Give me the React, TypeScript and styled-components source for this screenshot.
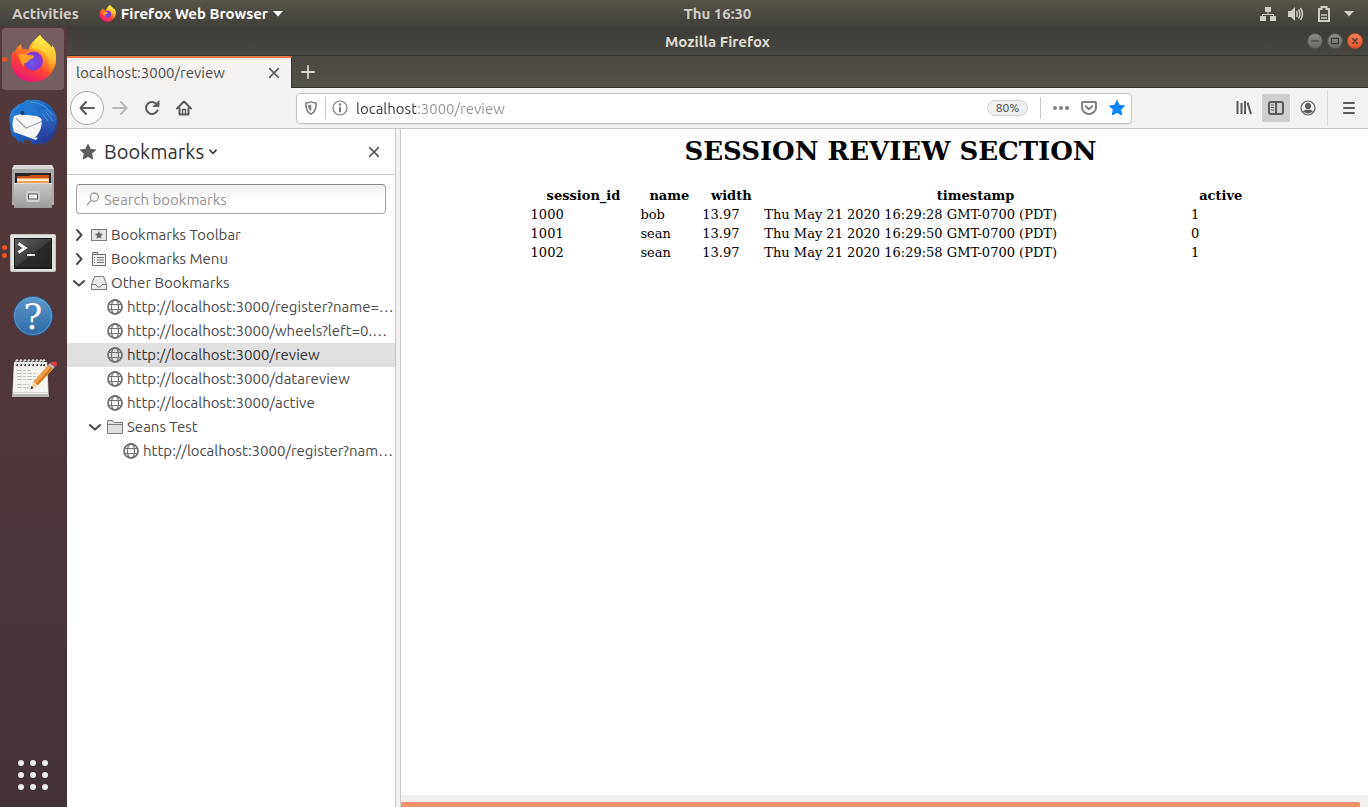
import React from "react";
import styled, { createGlobalStyle, css } from "styled-components";

const uiFont = `Ubuntu, "Noto Sans", sans-serif`;
const pageFont = `"DejaVu Serif", serif`;

const GlobalStyle = createGlobalStyle`
  *, *::before, *::after { box-sizing: border-box; }
  body { margin: 0; font-family: ${uiFont}; font-size: 15px; color: #4a4a4a; }
  button, input { font: inherit; color: inherit; }
  button { padding: 0; border: 0; background: none; }
  svg { display: block; flex: none; }
`;

const Desktop = styled.div`
  min-height: 100vh;
  display: flex;
  flex-direction: column;
`;

/* ---------- top panel ---------- */

const Panel = styled.header`
  height: 27px;
  display: flex;
  align-items: center;
  background: linear-gradient(#57544a, #403f39);
  color: #dfdbd2;
  font-weight: 600;
`;

const PanelStart = styled.div`
  flex: 1 1 81px;
  display: flex;
  align-items: center;
  gap: 20px;
  padding-left: 12px;
`;

const PanelEnd = styled.div`
  flex: 1 1 14px;
  display: flex;
  justify-content: flex-end;
  align-items: center;
  gap: 12px;
  padding-right: 14px;
`;

const PanelButton = styled.button<{ $bright?: boolean }>`
  display: flex;
  align-items: center;
  gap: 5px;
  font-weight: ${(p) => (p.$bright ? 700 : 600)};
  color: ${(p) => (p.$bright ? "#fff" : "#d0cdc6")};
  line-height: 16px;
  white-space: nowrap;
`;

const Workspace = styled.div`
  flex: 1;
  display: flex;
`;

/* ---------- dock ---------- */

const Dock = styled.nav`
  flex: none;
  width: 67px;
  display: flex;
  flex-direction: column;
  gap: 2px;
  padding: 1px 3px 1px 2px;
  background: linear-gradient(#53393b, #4d363a 55%, #423238);
`;

const DockItem = styled.button<{ $active?: boolean; $last?: boolean }>`
  position: relative;
  height: 62px;
  display: flex;
  align-items: center;
  justify-content: center;
  border-radius: 4px;
  background: ${(p) => (p.$active ? "#745e60" : "none")};
  ${(p) => p.$last && css`margin-top: auto;`}
`;

const Running = styled.span`
  position: absolute;
  left: 0;
  top: 0;
  bottom: 0;
  display: flex;
  flex-direction: column;
  justify-content: center;
  gap: 3px;
`;

const Dot = styled.i`
  width: 5px;
  height: 5px;
  border-radius: 50%;
  background: #e95420;
`;

/* ---------- browser window ---------- */

const Window = styled.section`
  flex: 1;
  min-width: 0;
  display: flex;
  flex-direction: column;
`;

const Chrome = styled.div`
  background: linear-gradient(#3c3b37, #504d45 70%, #525047);
`;

const TitleBar = styled.div`
  height: 28px;
  display: grid;
  grid-template-columns: 1fr auto 1fr;
  align-items: center;
  color: #dfdbd2;
  font-weight: 700;
`;

const WindowControls = styled.div`
  grid-column: 3;
  display: flex;
  justify-content: flex-end;
  gap: 4px;
  padding-right: 5px;
`;

const WindowTitle = styled.span`
  grid-column: 2;
`;

const ControlButton = styled.button<{ $close?: boolean }>`
  width: 16px;
  height: 16px;
  border-radius: 50%;
  border: 1px solid ${(p) => (p.$close ? "#b9502d" : "#55534c")};
  background: ${(p) =>
    p.$close ? "linear-gradient(#f58159, #e2512a)" : "linear-gradient(#8c8b84, #6b6962)"};
  color: #3c3b37;
  display: flex;
  align-items: center;
  justify-content: center;
`;

const TabStrip = styled.div`
  height: 33px;
  display: flex;
  border-top: 1px solid #35342f;
`;

const Tab = styled.div`
  width: 225px;
  display: flex;
  align-items: center;
  justify-content: space-between;
  padding: 0 10px 0 9px;
  border-top: 2px solid #f07746;
  border-right: 1px solid #35342f;
  background: #f4f3f1;
  color: #4c4c4c;
  line-height: 16px;
`;

const NewTabArea = styled.div`
  flex: 1;
  display: flex;
  align-items: center;
  padding-left: 7px;
  border-bottom: 1px solid #35342f;
`;

const IconButton = styled.button<{ $size?: number; $pressed?: boolean; $color?: string }>`
  flex: none;
  width: ${(p) => p.$size ?? 32}px;
  height: ${(p) => Math.min(p.$size ?? 28, 28)}px;
  display: flex;
  align-items: center;
  justify-content: center;
  border-radius: 2px;
  color: ${(p) => p.$color ?? "#5b5b5b"};
  background: ${(p) => (p.$pressed ? "#d0cfce" : "none")};
`;

const Toolbar = styled.div`
  height: 41px;
  display: flex;
  align-items: center;
  padding: 0 3px;
  background: #f4f3f1;
  border-bottom: 1px solid #c9c7c5;
`;

const BackButton = styled.button`
  width: 34px;
  height: 34px;
  border-radius: 50%;
  border: 1px solid #aaa9a7;
  background: #fbfbfa;
  color: #5b5b5b;
  display: flex;
  align-items: center;
  justify-content: center;
`;

const FlexSpace = styled.span`
  flex: 1 1 96px;
  max-width: 96px;
`;

const FieldGap = styled.span<{ $w: number }>`
  flex: none;
  width: ${(p) => p.$w}px;
`;

const AddressBar = styled.div`
  flex: 1 1 836px;
  height: 31px;
  display: flex;
  align-items: center;
  padding: 0 0 0 6px;
  border: 1px solid #c5c3c0;
  border-radius: 4px;
  background: #fff;
  box-shadow: 0 1px 2px rgba(0, 0, 0, 0.06);
`;

const BarLine = styled.span<{ $tall?: boolean }>`
  flex: none;
  width: 1px;
  height: ${(p) => (p.$tall ? 34 : 22)}px;
  background: ${(p) => (p.$tall ? "#dcdad8" : "#c8c7c5")};
`;

const AddressInput = styled.input`
  flex: 1;
  min-width: 0;
  padding: 0;
  border: 0;
  outline: 0;
  background: linear-gradient(90deg, #333 60px, #949494 60px);
  background-clip: text;
  -webkit-text-fill-color: transparent;
`;

const ZoomPill = styled.button`
  width: 41px;
  height: 16px;
  margin-right: 12px;
  border: 1px solid #cfcfcf;
  border-radius: 8px;
  background: #f0f0f0;
  color: #444;
  font-size: 12px;
  line-height: 14px;
`;

const Body = styled.div`
  flex: 1;
  display: flex;
`;

/* ---------- bookmarks sidebar ---------- */

const Sidebar = styled.aside`
  flex: none;
  width: 329px;
  border-right: 1px solid #c9c7c5;
  background: #fff;
`;

const Splitter = styled.div`
  flex: none;
  width: 5px;
  background: #f2f1ef;
  border-right: 1px solid #c9c7c5;
`;

const SidebarHeader = styled.div`
  height: 46px;
  display: flex;
  align-items: center;
  justify-content: space-between;
  padding: 0 12px 0 13px;
  border-bottom: 1px solid #c9c7c5;
`;

const SidebarSwitch = styled.button`
  display: flex;
  align-items: center;
  gap: 4px;
  color: #333;
  font-size: 20px;
`;

const SidebarName = styled.span`
  padding-left: 4px;
`;

const SearchBox = styled.label`
  height: 30px;
  margin: 9px;
  display: flex;
  align-items: center;
  gap: 4px;
  padding: 0 9px;
  border: 1px solid #a5a4a2;
  border-top-color: #888785;
  border-radius: 4px;
  background: linear-gradient(#f1f1f0, #fff 60%);
  color: #8e8e8e;
`;

const SearchInput = styled.input`
  flex: 1;
  min-width: 0;
  padding: 0;
  border: 0;
  outline: 0;
  background: none;
  &::placeholder {
    color: #939393;
    opacity: 1;
  }
`;

const Tree = styled.ul`
  margin: 0;
  padding: 0;
  list-style: none;
`;

const rowStyle = css<{ $level: number }>`
  width: 100%;
  height: 24px;
  display: flex;
  align-items: center;
  gap: 4px;
  text-align: left;
  white-space: nowrap;
  text-decoration: none;
  line-height: 18px;
  color: #4a4a4a;
`;

const FolderRow = styled.button<{ $level: number }>`
  ${rowStyle}
  padding-left: ${(p) => 4 + p.$level * 16}px;
`;

const LinkRow = styled.a<{ $level: number; $selected?: boolean }>`
  ${rowStyle}
  padding-left: ${(p) => 24 + p.$level * 16}px;
  background: ${(p) => (p.$selected ? "#e0e0e0" : "none")};
  ${(p) => p.$selected && css`color: #333;`}
`;

/* ---------- web page ---------- */

const Viewport = styled.div`
  flex: 1;
  min-width: 0;
  display: flex;
  flex-direction: column;
  background: #fff;
`;

const Page = styled.main`
  flex: 1;
  padding: 7px 0 0 12px;
  font-family: ${pageFont};
  font-size: 13px;
  color: #000;
`;

const Heading = styled.h1`
  margin: 0 0 18px;
  font-size: 26px;
  line-height: 31px;
  text-align: center;
`;

const SessionTable = styled.table`
  width: 76%;
  margin: 0 auto;
  table-layout: fixed;
  border-collapse: separate;
  border-spacing: 2px;
  line-height: 15px;
  th, td { padding: 1px; white-space: nowrap; }
`;

const Col = styled.col<{ $share: number }>`
  width: ${(p) => p.$share}%;
`;

const ScrollTrack = styled.div`
  height: 12px;
  padding: 7px 8px 0 0;
  background: #f1f0ee;
`;

const ScrollThumb = styled.div`
  height: 5px;
  border-radius: 0 2px 0 0;
  background: #f2906a;
`;

/* ---------- icons ---------- */

const FirefoxLogo = ({ size, id }: { size: number; id: string }) => (
  <svg width={size} height={size} viewBox="0 0 48 48">
    <defs>
      <linearGradient id={id + "a"} x1="0.8" y1="0" x2="0.3" y2="1">
        <stop offset="0" stopColor="#fff44f" />
        <stop offset="0.35" stopColor="#ffa41f" />
        <stop offset="0.65" stopColor="#ff4533" />
        <stop offset="1" stopColor="#e5147d" />
      </linearGradient>
      <linearGradient id={id + "b"} x1="0.6" y1="0" x2="0.5" y2="1">
        <stop offset="0" stopColor="#fff651" />
        <stop offset="0.5" stopColor="#ffc52e" />
        <stop offset="1" stopColor="#ff8a22" stopOpacity="0" />
      </linearGradient>
      <radialGradient id={id + "c"} cx="0.4" cy="0.6" r="0.65">
        <stop offset="0" stopColor="#6a5bf0" />
        <stop offset="0.6" stopColor="#7a3fd8" />
        <stop offset="1" stopColor="#9a2bc6" />
      </radialGradient>
    </defs>
    <path
      fill={`url(#${id}a)`}
      d="M31 0C34 5 40 8 43 13c.6-1 .4-2 .2-3C46 14 47 18 47 24c0 13-10 23-23 23S2 38 2 26c0-4 .7-8 3-11l.2 3c1-4 4-7 7-9 0 2 .5 4 1.500 5 2 0 4 0 6 1C20 9 25 6 31 0z"
    />
    <path
      fill={`url(#${id}b)`}
      d="M31 0C34 5 40 8 43 13c.6-1 .4-2 .2-3C46 14 47 18 47 24c0 7-4 14-10 17 4-7 4-17-2-23-4-4-9-4-12-5 0-5 4-9 8-13z"
    />
    <circle cx="24.500" cy="26" r="9.500" fill={`url(#${id}c)`} />
    <path
      fill="#ffa126"
      d="M9 20c3-2 7-1 10 0 2 .5 5 0 6 1 0 2-3 3-5 4-1 2-2 3-4 3-1 0-1 2-1 4-3-3-4-8-6-12z"
    />
    <path fill="#ff6a2b" d="M13.500 14c2 0 4 0 6 1-2 1-3 3-3 4-3 0-6 0-8 2 0-3 2-5 5-7z" />
  </svg>
);

const ThunderbirdLogo = () => (
  <svg width="48" height="48" viewBox="0 0 48 48">
    <defs>
      <linearGradient id="tb" x1="0" y1="0" x2="1" y2="1">
        <stop offset="0" stopColor="#2f8fe0" />
        <stop offset="0.5" stopColor="#1f62bd" />
        <stop offset="1" stopColor="#2a2a86" />
      </linearGradient>
      <linearGradient id="tbWing" x1="0" y1="0" x2="0" y2="1">
        <stop offset="0" stopColor="#2a76cc" />
        <stop offset="1" stopColor="#27348f" />
      </linearGradient>
    </defs>
    <path
      fill="url(#tb)"
      d="M14 4c2-3 5-4 8-3C36-1 48 9 48 24c0 12-8 21-17 22l2-3c-3 2-7 3-10 2l-1-3 -6-2 -2 5 -3-4 -1 3c-2-2-3-4-4-6l-3-1C2 33 1 30 1 28l1 .5C0 23 0 17 2 13 4 9 9 5 14 4z"
    />
    <path fill="#f6f6f7" d="M5 17l4-2 19 2 5 3c1 8-2 16-6 21L5 33C3 28 3 23 5 17z" />
    <path fill="none" stroke="#a4a8ae" strokeWidth="1.200" d="M7 19l10 10 17-7" />
    <path fill="url(#tbWing)" d="M30 12c6-4 13-2 17 4 2 9-2 20-14 28l2-5-6 4c1-2 1-3 1-5l-4 1c7-8 9-16 4-27z" />
    <path fill="#2277d2" d="M5 17c2-6 6-11 11-13 7 3 11 7 18 13l-14-1c-6-1-10-1-15 1z" />
    <circle cx="13.500" cy="14" r="2" fill="#173a63" />
    <path fill="none" stroke="#4a98e3" strokeWidth="1" d="M21 3c9 0 18 5 22 13M33 14l6 8M37 13l7 9" />
  </svg>
);

const FilesLogo = () => (
  <svg width="48" height="48" viewBox="0 0 48 48">
    <defs>
      <linearGradient id="cab" x1="0" y1="0" x2="0" y2="1">
        <stop offset="0" stopColor="#c9c9c7" />
        <stop offset="1" stopColor="#9c9c9a" />
      </linearGradient>
    </defs>
    <path fill="#aaa9a7" d="M5 2h38l2 4v36H3V6z" />
    <path fill="#d8d8d6" d="M5 2h38l2 4H3z" />
    <path fill="#262626" d="M6 10h36v11H6z" />
    <path fill="#c5501a" d="M8 13h12l2-1h18v8H8z" />
    <path fill="#f6a04d" d="M8 15h32v1H8zM8 18h32v3H8z" />
    <path fill="#f9efe0" d="M8 16h32v2H8z" />
    <rect x="5" y="20" width="38" height="25" rx="1" fill="url(#cab)" />
    <path fill="#dededc" d="M5 20h38v1H5z" />
    <rect x="17" y="28" width="14" height="11" rx="2" fill="#d0d0ce" />
    <rect x="19.500" y="31" width="9" height="5" fill="#eee" stroke="#5a5a58" />
  </svg>
);

const TerminalLogo = () => (
  <svg width="48" height="48" viewBox="0 0 48 48">
    <defs>
      <linearGradient id="term" x1="0" y1="0" x2="1" y2="1">
        <stop offset="0" stopColor="#5c5e5b" />
        <stop offset="0.5" stopColor="#3b3d3b" />
        <stop offset="0.520" stopColor="#2a2c2b" />
        <stop offset="1" stopColor="#222423" />
      </linearGradient>
    </defs>
    <rect x="1" y="7" width="46" height="38" rx="2" fill="#c4c4c3" />
    <rect x="2" y="8" width="44" height="36" rx="1" fill="#e1e1e0" />
    <rect x="5" y="11" width="38" height="31" fill="#191b1a" />
    <rect x="6" y="12" width="36" height="28" fill="url(#term)" />
    <path fill="none" stroke="#f1f1f0" strokeWidth="3" d="M9.500 16.500l6.500 4.500-6.500 4.500" />
    <path fill="#f1f1f0" d="M18 27h8v2h-8z" />
  </svg>
);

const HelpLogo = () => (
  <svg width="48" height="48" viewBox="0 0 48 48">
    <defs>
      <linearGradient id="help" x1="0" y1="0" x2="0" y2="1">
        <stop offset="0" stopColor="#5b98cb" />
        <stop offset="1" stopColor="#2d69a5" />
      </linearGradient>
    </defs>
    <circle cx="24" cy="25" r="19.500" fill="url(#help)" stroke="#25598d" />
    <circle cx="24" cy="25" r="18.500" fill="none" stroke="#76abd7" strokeOpacity="0.600" />
    <text x="24" y="38" textAnchor="middle" fontFamily="DejaVu Serif, serif" fontSize="35" fill="#fff">
      ?
    </text>
  </svg>
);

const NotesLogo = () => (
  <svg width="48" height="48" viewBox="0 0 48 48">
    <path fill="#b7b7b4" d="M5 8h33l2 34H3z" />
    <path fill="#f5f5f2" d="M5 7h33l1 32H4z" />
    <path stroke="#d8d8d5" strokeWidth="1" d="M4 37.500h35" />
    {[8, 12, 16, 20, 24, 28, 32, 35].map((x) => (
      <g key={x}>
        <circle cx={x} cy="10" r="1.200" fill="#4b4b4b" />
        <path d={`M${x - 1} 10V6q1-2 2 0`} fill="none" stroke="#e8e8e6" strokeWidth="1.300" />
      </g>
    ))}
    <path
      stroke="#c2c2bf"
      strokeWidth="1"
      strokeDasharray="5 1 3 1"
      d="M8 15.500h14M8 18.500h20M8 21.500h22M8 24.500h17M8 29.500h12M8 32.500h13"
    />
    <path fill="#f0a04a" d="M24 27L39 10l5 4-15 16z" />
    <path fill="#d67c22" d="M27 29l15-17 2 2-15 16z" />
    <path fill="#f3d3a4" d="M24 27l5 4-7 3z" />
    <path fill="#222" d="M22.500 31l2 2-3 1.500z" />
    <path fill="#b6b9bc" d="M39 10l2-2 5 4-2 2z" />
    <path fill="#e0393f" d="M41 8c2-1 6-2 7 0 0 2-1 3-2 4z" />
  </svg>
);

const AppGrid = () => (
  <svg width="32" height="32" viewBox="0 0 32 32" fill="#eeeeec">
    {[4, 16, 28].map((y) => [4, 16, 28].map((x) => <circle key={`${x}-${y}`} cx={x} cy={y} r="3" />))}
  </svg>
);

const Glyph = ({
  d,
  size = 16,
  w = 2,
  fill = "none",
  children,
}: {
  d?: string;
  size?: number;
  w?: number;
  fill?: string;
  children?: React.ReactNode;
}) => (
  <svg
    width={size}
    height={size}
    viewBox="0 0 16 16"
    fill={fill}
    stroke="currentColor"
    strokeWidth={w}
    strokeLinecap="round"
    strokeLinejoin="round"
  >
    {d && <path d={d} />}
    {children}
  </svg>
);

const starPath =
  "M8 .5l2.300 4.800 5.200.7-3.800 3.600 1 5.300L8 12.400l-4.700 2.500 1-5.300L.5 6l5.200-.7z";

const Star = ({ color = "currentColor" }: { color?: string }) => (
  <svg width="16" height="16" viewBox="0 0 16 16" fill={color} stroke={color} strokeLinejoin="round">
    <path d={starPath} />
  </svg>
);

const Globe = () => (
  <svg width="16" height="16" viewBox="0 0 16 16" fill="none" stroke="#737373" strokeWidth="1.200">
    <circle cx="8" cy="8" r="7" strokeWidth="1.800" />
    <ellipse cx="8" cy="8" rx="3.600" ry="7" />
    <path d="M1.500 5.500h13M1.500 10.500h13" />
  </svg>
);

const ToolbarFolder = () => (
  <svg width="16" height="16" viewBox="0 0 16 16">
    <rect x=".5" y="2.500" width="15" height="11" fill="#e6e6e6" stroke="#7a7a7a" />
    <path fill="#666" d="M8 4l1.200 2.600 2.800.4-2 2 .5 2.800L8 10.500l-2.500 1.300L6 9 4 7l2.800-.4z" />
  </svg>
);

const MenuFolder = () => (
  <svg width="16" height="16" viewBox="0 0 16 16" fill="none" stroke="#6f6f6f">
    <path d="M1.500 14.500v-13h5v2h8v11z" fill="#f2f2f2" />
    <path d="M1.500 3.500h5M3 6.500h1M3 9h1M3 11.500h1M6 6.500h7M6 9h7M6 11.500h7" />
  </svg>
);

const InboxFolder = () => (
  <svg width="16" height="16" viewBox="0 0 16 16" fill="#ebebeb" stroke="#7a7a7a" strokeLinejoin="round">
    <path d="M3.500 1.500h9l3 8v5H.5v-5z" />
    <path d="M.5 9.500H5c.5 2 1.500 2.500 3 2.500s2.500-.5 3-2.500h4.500" />
  </svg>
);

const PlainFolder = () => (
  <svg width="16" height="16" viewBox="0 0 16 16" fill="#e0e0e0" stroke="#7a7a7a" strokeLinejoin="round">
    <path d="M.5 14.500v-13h5l1.500 2h8.500v11z" />
    <path d="M.5 5.500h15" fill="none" />
  </svg>
);

const Twisty = ({ open }: { open?: boolean }) => (
  <Glyph d={open ? "M3 6l5 4.500L13 6" : "M6 3l4.500 5L6 13"} />
);

/* ---------- data ---------- */

type Bookmark = { label: string; href: string; level: number; selected?: boolean };

const host = "http://localhost:3000";

const otherBookmarks: Bookmark[] = [
  { label: `${host}/register?name=…`, href: `${host}/register`, level: 1 },
  { label: `${host}/wheels?left=0.…`, href: `${host}/wheels`, level: 1 },
  { label: `${host}/review`, href: `${host}/review`, level: 1, selected: true },
  { label: `${host}/datareview`, href: `${host}/datareview`, level: 1 },
  { label: `${host}/active`, href: `${host}/active`, level: 1 },
];

const testBookmarks: Bookmark[] = [
  { label: `${host}/register?nam…`, href: `${host}/register`, level: 2 },
];

const columns = [
  { name: "session_id", share: 15.1 },
  { name: "name", share: 8.4 },
  { name: "width", share: 8.4 },
  { name: "timestamp", share: 59.5 },
  { name: "active", share: 8.6 },
];

const sessions = [
  ["1000", "bob", "13.97", "Thu May 21 2020 16:29:28 GMT-0700 (PDT)", "1"],
  ["1001", "sean", "13.97", "Thu May 21 2020 16:29:50 GMT-0700 (PDT)", "0"],
  ["1002", "sean", "13.97", "Thu May 21 2020 16:29:58 GMT-0700 (PDT)", "1"],
];

const BookmarkItem = ({ item }: { item: Bookmark }) => (
  <li>
    <LinkRow href={item.href} $level={item.level} $selected={item.selected}>
      <Globe />
      {item.label}
    </LinkRow>
  </li>
);

const dockApps = [
  { name: "Firefox Web Browser", icon: <FirefoxLogo size={48} id="dock" />, windows: 1, active: true },
  { name: "Thunderbird Mail", icon: <ThunderbirdLogo />, windows: 0 },
  { name: "Files", icon: <FilesLogo />, windows: 0 },
  { name: "Terminal", icon: <TerminalLogo />, windows: 2 },
  { name: "Help", icon: <HelpLogo />, windows: 0 },
  { name: "Text Editor", icon: <NotesLogo />, windows: 0 },
];

export default function App() {
  return (
    <Desktop>
      <GlobalStyle />
      <Panel>
        <PanelStart>
          <PanelButton>Activities</PanelButton>
          <PanelButton $bright>
            <FirefoxLogo size={17} id="panel" />
            Firefox Web Browser
            <svg width="10" height="6" viewBox="0 0 10 6" fill="currentColor">
              <path d="M0 0h10L5 5.500z" />
            </svg>
          </PanelButton>
        </PanelStart>
        <PanelButton>Thu 16:30</PanelButton>
        <PanelEnd>
          <PanelButton aria-label="Network">
            <svg width="16" height="16" viewBox="0 0 16 16" fill="currentColor">
              <path d="M5 1h6v5H8.500v2H14v2h2v5h-6v-5h3V9H3v1h3v5H0v-5h2V8h5.500V6H5z" />
            </svg>
          </PanelButton>
          <PanelButton aria-label="Volume">
            <svg width="16" height="16" viewBox="0 0 16 16" fill="none" stroke="currentColor" strokeWidth="1.500">
              <path d="M0 5h3l4-4v14l-4-4H0z" fill="currentColor" stroke="none" />
              <path d="M8.500 5q1.500 3 0 6M10.500 3.500q3 4.500 0 9M12.500 2q4 6 0 12" />
            </svg>
          </PanelButton>
          <PanelButton aria-label="Battery">
            <svg width="16" height="16" viewBox="0 0 16 16" fill="none" stroke="currentColor" strokeWidth="2">
              <path d="M5.500 3V1h5v2H13v12H3V3z" />
              <path d="M5 9h6M5 12h6" strokeWidth="1.500" />
            </svg>
          </PanelButton>
          <PanelButton aria-label="System menu">
            <svg width="10" height="6" viewBox="0 0 10 6" fill="currentColor">
              <path d="M0 0h10L5 5.500z" />
            </svg>
          </PanelButton>
        </PanelEnd>
      </Panel>

      <Workspace>
        <Dock>
          {dockApps.map((app) => (
            <DockItem key={app.name} $active={app.active} aria-label={app.name}>
              {app.windows > 0 && (
                <Running>
                  {Array.from({ length: app.windows }, (_, i) => (
                    <Dot key={i} />
                  ))}
                </Running>
              )}
              {app.icon}
            </DockItem>
          ))}
          <DockItem $last aria-label="Show Applications">
            <AppGrid />
          </DockItem>
        </Dock>

        <Window>
          <Chrome>
            <TitleBar>
              <WindowTitle>Mozilla Firefox</WindowTitle>
              <WindowControls>
                <ControlButton aria-label="Minimize">
                  <Glyph size={14} w={1.2} d="M4 8h8" />
                </ControlButton>
                <ControlButton aria-label="Maximize">
                  <Glyph size={14} w={1.2} d="M4 5h8v6H4z" />
                </ControlButton>
                <ControlButton $close aria-label="Close window">
                  <Glyph size={14} w={1.6} d="M5.500 5.500l5 5M10.500 5.500l-5 5" />
                </ControlButton>
              </WindowControls>
            </TitleBar>
            <TabStrip>
              <Tab>
                localhost:3000/review
                <IconButton $size={14} aria-label="Close tab">
                  <Glyph size={14} w={1.8} d="M3 3l10 10M13 3L3 13" />
                </IconButton>
              </Tab>
              <NewTabArea>
                <IconButton $size={18} $color="#d8d5cd" aria-label="New tab">
                  <Glyph size={16} w={1.8} d="M8 2v12M2 8h12" />
                </IconButton>
              </NewTabArea>
            </TabStrip>
          </Chrome>

          <Toolbar>
            <BackButton aria-label="Back">
              <Glyph d="M15 8H1.500M7 2L1.500 8 7 14" />
            </BackButton>
            <IconButton $color="#b9b8b6" aria-label="Forward">
              <Glyph d="M1 8h13.500M9 2l5.500 6L9 14" />
            </IconButton>
            <IconButton aria-label="Reload">
              <Glyph d="M13.500 10.500a6 6 0 1 1-.5-6">
                <path d="M9.500 6.500H15V1z" fill="currentColor" strokeWidth="1" />
              </Glyph>
            </IconButton>
            <IconButton aria-label="Home">
              <Glyph d="M1 8.500L8 1.500l7 7M3.500 8v6.500h9V8">
                <path d="M6.500 14V9.500h3V14" strokeWidth="1.500" />
              </Glyph>
            </IconButton>
            <FlexSpace />
            <AddressBar>
              <IconButton $size={16} $color="#7d7d7d" aria-label="Tracking protection">
                <Glyph size={14} w={1.8} d="M8 1c2 1 4 1.200 6 1.200 0 6-1 10.500-6 12.800C3 12.700 2 8.200 2 2.200 4 2.200 6 2 8 1z">
                  <path d="M8 4.500v7C6 10 5.300 8 5.200 5.200z" fill="currentColor" strokeWidth="0.500" />
                </Glyph>
              </IconButton>
              <FieldGap $w={6} />
              <BarLine />
              <FieldGap $w={6} />
              <IconButton $size={16} $color="#7d7d7d" aria-label="Site information">
                <Glyph w={1.2}>
                  <circle cx="8" cy="8" r="7" />
                  <path d="M8 7.500v4" strokeWidth="2" />
                  <circle cx="8" cy="4.500" r="0.600" fill="currentColor" />
                </Glyph>
              </IconButton>
              <FieldGap $w={8} />
              <AddressInput aria-label="Address" defaultValue="localhost:3000/review" />
              <ZoomPill>80%</ZoomPill>
              <BarLine />
              <FieldGap $w={6} />
              <IconButton $size={28} $color="#808080" aria-label="Page actions">
                <svg width="18" height="16" viewBox="0 0 18 16" fill="currentColor">
                  <circle cx="3" cy="8" r="2" />
                  <circle cx="9" cy="8" r="2" />
                  <circle cx="15" cy="8" r="2" />
                </svg>
              </IconButton>
              <IconButton $size={28} $color="#808080" aria-label="Save to Pocket">
                <Glyph d="M2 2h12q1 0 1 1v4.500a7 6.500 0 0 1-14 0V3q0-1 1-1zM4.800 6.200L8 9.300l3.200-3.100" />
              </IconButton>
              <IconButton $size={28} aria-label="Edit this bookmark">
                <Star color="#0a84ff" />
              </IconButton>
            </AddressBar>
            <FlexSpace />
            <IconButton aria-label="Library">
              <svg width="16" height="16" viewBox="0 0 16 16" fill="none" stroke="currentColor" strokeWidth="2">
                <path d="M1.500 1v13M5.500 3v11M9 1v13M11.500 2.500l3.500 11.500" />
              </svg>
            </IconButton>
            <FieldGap $w={2} />
            <IconButton $size={28} $pressed aria-label="Show sidebars">
              <Glyph d="M3 2h10q2 0 2 2v8q0 2-2 2H3q-2 0-2-2V4q0-2 2-2zM8 2v12">
                <path d="M3.500 5h2M3.500 7.500h2M3.500 10h2" strokeWidth="1" />
              </Glyph>
            </IconButton>
            <FieldGap $w={2} />
            <IconButton aria-label="Account">
              <Glyph w={1.2}>
                <circle cx="8" cy="8" r="7" />
                <circle cx="8" cy="6" r="2.500" fill="currentColor" />
                <path d="M3.500 11.500q.5-1.500 2.500-1.500h4q2 0 2.500 1.500-2 1.800-4.500 1.800t-4.500-1.800z" fill="currentColor" strokeWidth="0.500" />
              </Glyph>
            </IconButton>
            <FieldGap $w={3} />
            <BarLine $tall />
            <FieldGap $w={5} />
            <IconButton aria-label="Open menu">
              <Glyph d="M3 3h10M3 8h10M3 13h10" />
            </IconButton>
          </Toolbar>

          <Body>
            <Sidebar>
              <SidebarHeader>
                <SidebarSwitch>
                  <Star color="#5b5b5b" />
                  <SidebarName>Bookmarks</SidebarName>
                  <Glyph size={10} w={2.4} d="M3 5l5 5.500L13 5" />
                </SidebarSwitch>
                <IconButton $size={18} aria-label="Close sidebar">
                  <Glyph size={14} d="M3 3l10 10M13 3L3 13" />
                </IconButton>
              </SidebarHeader>
              <SearchBox>
                <Glyph size={14} w={1.3}>
                  <circle cx="9.500" cy="6" r="4.700" />
                  <path d="M6 9.500L1.500 14.500" />
                </Glyph>
                <SearchInput type="text" placeholder="Search bookmarks" aria-label="Search bookmarks" />
              </SearchBox>
              <Tree>
                <li>
                  <FolderRow $level={0}>
                    <Twisty />
                    <ToolbarFolder />
                    Bookmarks Toolbar
                  </FolderRow>
                </li>
                <li>
                  <FolderRow $level={0}>
                    <Twisty />
                    <MenuFolder />
                    Bookmarks Menu
                  </FolderRow>
                </li>
                <li>
                  <FolderRow $level={0}>
                    <Twisty open />
                    <InboxFolder />
                    Other Bookmarks
                  </FolderRow>
                  <Tree>
                    {otherBookmarks.map((item) => (
                      <BookmarkItem key={item.label} item={item} />
                    ))}
                    <li>
                      <FolderRow $level={1}>
                        <Twisty open />
                        <PlainFolder />
                        Seans Test
                      </FolderRow>
                      <Tree>
                        {testBookmarks.map((item) => (
                          <BookmarkItem key={item.label} item={item} />
                        ))}
                      </Tree>
                    </li>
                  </Tree>
                </li>
              </Tree>
            </Sidebar>
            <Splitter />
            <Viewport>
              <Page>
                <Heading>SESSION REVIEW SECTION</Heading>
                <SessionTable>
                  <colgroup>
                    {columns.map((c) => (
                      <Col key={c.name} $share={c.share} />
                    ))}
                  </colgroup>
                  <thead>
                    <tr>
                      {columns.map((c) => (
                        <th key={c.name} scope="col">
                          {c.name}
                        </th>
                      ))}
                    </tr>
                  </thead>
                  <tbody>
                    {sessions.map((row) => (
                      <tr key={row[0]}>
                        {row.map((cell, i) => (
                          <td key={i}>{cell}</td>
                        ))}
                      </tr>
                    ))}
                  </tbody>
                </SessionTable>
              </Page>
              <ScrollTrack>
                <ScrollThumb />
              </ScrollTrack>
            </Viewport>
          </Body>
        </Window>
      </Workspace>
    </Desktop>
  );
}
